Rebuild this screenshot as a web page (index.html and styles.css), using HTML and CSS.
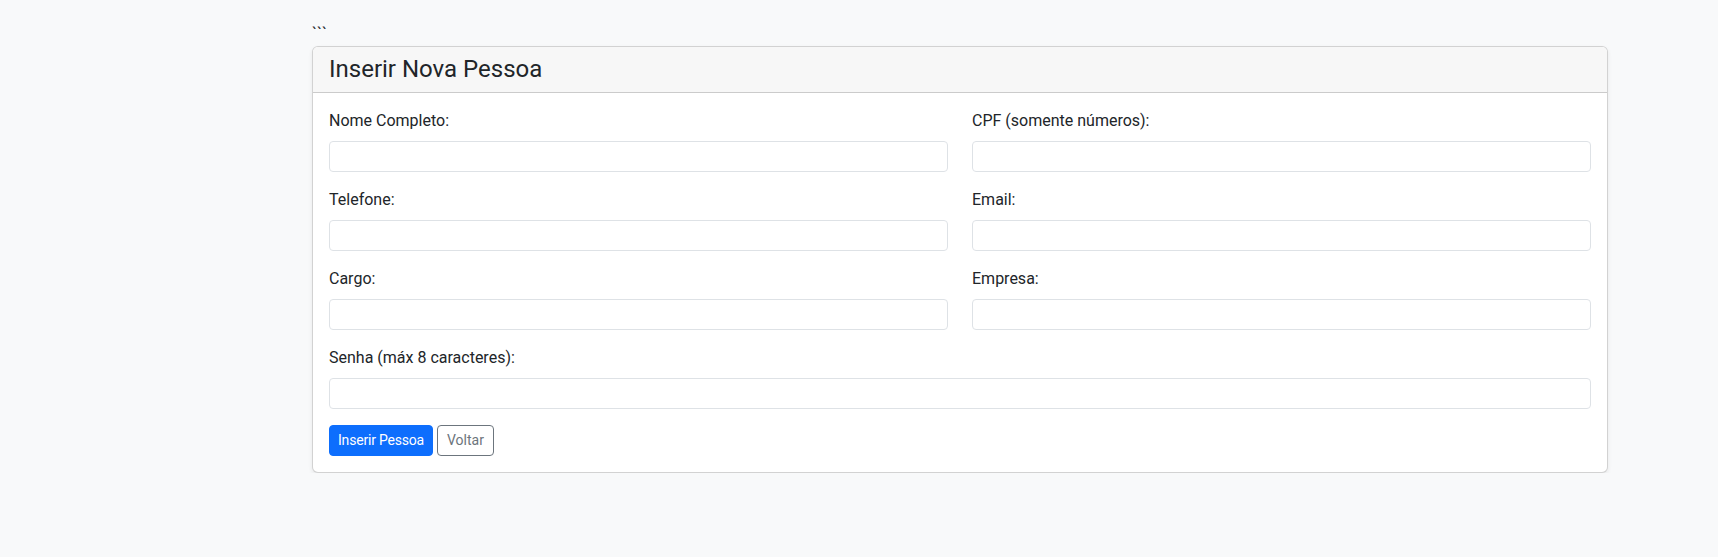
FILE: index.html
```html
<!DOCTYPE html>
<html lang="pt-BR">
<head>
<meta charset="utf-8">
<title>Inserir Nova Pessoa</title>
<link rel="stylesheet" href="styles.css">
</head>
<body>
<main class="main">
  <p class="stray">```</p>
  <section class="card">
    <header class="card-header">
      <h4 class="card-title">Inserir Nova Pessoa</h4>
    </header>
    <form class="card-body">
      <div class="grid">
        <div class="field">
          <label class="label" for="nome">Nome Completo:</label>
          <input class="input" id="nome" type="text">
        </div>
        <div class="field">
          <label class="label" for="cpf">CPF (somente números):</label>
          <input class="input" id="cpf" type="text">
        </div>
        <div class="field">
          <label class="label" for="tel">Telefone:</label>
          <input class="input" id="tel" type="text">
        </div>
        <div class="field">
          <label class="label" for="email">Email:</label>
          <input class="input" id="email" type="email">
        </div>
        <div class="field">
          <label class="label" for="cargo">Cargo:</label>
          <input class="input" id="cargo" type="text">
        </div>
        <div class="field">
          <label class="label" for="empresa">Empresa:</label>
          <input class="input" id="empresa" type="text">
        </div>
        <div class="field field-full">
          <label class="label" for="senha">Senha (máx 8 caracteres):</label>
          <input class="input" id="senha" type="password">
        </div>
      </div>
      <div class="actions">
        <button type="button" class="btn btn-primary">Inserir Pessoa</button>
        <button type="button" class="btn btn-outline">Voltar</button>
      </div>
    </form>
  </section>
</main>
</body>
</html>
```
FILE: styles.css
```css
* { box-sizing: border-box; }
html, body { margin: 0; }
body {
  background: #f8f9fa;
  color: #212529;
  font-family: Roboto, "Liberation Sans", sans-serif;
  font-size: 16px;
  line-height: 1.5;
}
.main {
  width: 1296px;
  margin-left: 312px;
  padding-top: 22px;
}
.stray {
  margin: 0;
  height: 24px;
  font-size: 16px;
  line-height: 24px;
}
.card {
  background: #fff;
  border: 1px solid rgba(0, 0, 0, 0.175);
  border-radius: 6px;
  box-shadow: 0 2px 4px rgba(0, 0, 0, 0.075);
  overflow: hidden;
}
.card-header {
  padding: 8px 16px;
  background: #f7f7f7;
  border-bottom: 1px solid rgba(0, 0, 0, 0.175);
}
.card-title {
  margin: 0;
  font-size: 24px;
  line-height: 1.2;
  font-weight: 400;
  color: #212529;
}
.card-body {
  display: block;
  padding: 16px;
  margin: 0;
}
.grid {
  display: grid;
  grid-template-columns: 1fr 1fr;
  column-gap: 24px;
}
.field { margin-bottom: 16px; }
.field-full { grid-column: 1 / -1; }
.label {
  display: block;
  margin-bottom: 8px;
  font-size: 16px;
  line-height: 24px;
  color: #212529;
}
.input {
  display: block;
  width: 100%;
  height: 31px;
  padding: 4px 8px;
  font-family: inherit;
  font-size: 14px;
  line-height: 21px;
  color: #212529;
  background: #fff;
  border: 1px solid #dee2e6;
  border-radius: 4px;
  outline: none;
}
.actions {
  display: flex;
  gap: 4px;
}
.btn {
  height: 31px;
  padding: 4px 8px;
  font-family: inherit;
  font-size: 14px;
  line-height: 21px;
  border-radius: 4px;
  border: 1px solid transparent;
  cursor: pointer;
}
.btn-primary {
  background: #0d6efd;
  border-color: #0d6efd;
  color: #fff;
  letter-spacing: -0.2px;
}
.btn-outline {
  background: transparent;
  border-color: #6c757d;
  color: #6c757d;
  padding: 4px 9px;
}
```
